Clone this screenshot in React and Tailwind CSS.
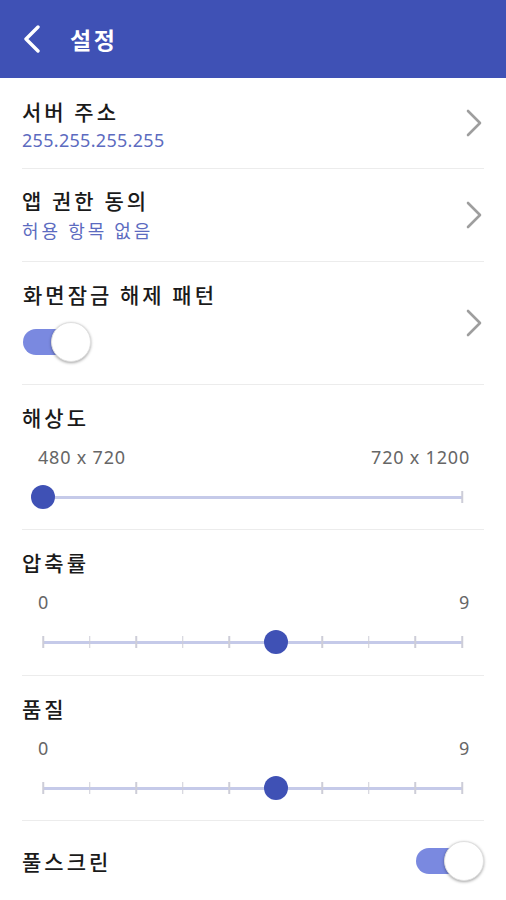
import React, { useState } from 'react';

const KR = { fontFamily: '"Noto Sans CJK KR", "Noto Sans", sans-serif' };
const NUM = { fontFamily: '"Noto Sans", "Noto Sans CJK KR", sans-serif' };

const Chevron = () => (
  <svg width="18" height="28" viewBox="0 0 18 28" className="mr-[1px]">
    <path d="M3 2 L15 14 L3 26" fill="none" stroke="#9e9e9e" strokeWidth="2.6" strokeLinecap="round" strokeLinejoin="round" />
  </svg>
);

const Toggle = ({ on, onClick }) => (
  <button onClick={onClick} className="relative w-[68px] h-[40px] shrink-0">
    <span className={`absolute left-0 top-[7px] w-[62px] h-[26px] rounded-full ${on ? 'bg-[#7a89e0]' : 'bg-[#bdbdbd]'}`} />
    <span
      className={`absolute top-0 w-[40px] h-[40px] rounded-full bg-white border border-[#e0e0e0] shadow-[0_1px_3px_rgba(0,0,0,0.35)] ${on ? 'right-0' : 'left-0'}`}
    />
  </button>
);

const Slider = ({ steps, value, ticks }) => {
  const pct = (value / steps) * 100;
  return (
    <div className="mt-[16px] ml-[21px] mr-[22px] relative h-[24px] flex items-center">
      <div className="w-full h-[3px] bg-[#c5cae9]" />
      {Array.from({ length: steps + 1 }).map((_, i) => (
        (ticks || i === steps) && (
          <span
            key={i}
            className="absolute top-[6px] w-[1.5px] h-[12px] bg-[#cdcdd8] -translate-x-1/2"
            style={{ left: `${(i / steps) * 100}%` }}
          />
        )
      ))}
      <span
        className="absolute top-0 w-[24px] h-[24px] rounded-full bg-[#3f51b5] -translate-x-1/2"
        style={{ left: `${pct}%` }}
      />
    </div>
  );
};

const Title = ({ children, className = '' }) => (
  <div className={`text-[21px] leading-[28px] font-medium tracking-[3px] text-[#1a1a1a] ${className}`}>{children}</div>
);

const SliderRow = ({ title, left, right, steps, value, ticks, h }) => (
  <div className={`mx-[22px] border-b border-[#ececec] ${h}`}>
    <Title className="pt-[18px]">{title}</Title>
    <div className="mt-[14px] pl-[16px] pr-[14px] flex justify-between text-[18px] leading-[24px] tracking-[0.8px] text-[#666666]" style={NUM}>
      <span>{left}</span>
      <span>{right}</span>
    </div>
    <Slider steps={steps} value={value} ticks={ticks} />
  </div>
);

export default function App() {
  const [pattern, setPattern] = useState(true);
  const [full, setFull] = useState(true);

  return (
    <div className="w-[506px] h-[900px] bg-white overflow-hidden" style={KR}>
      <header className="h-[78px] bg-[#3f51b5] flex items-center pl-[23px]">
        <svg width="18" height="28" viewBox="0 0 18 28">
          <path d="M15 2 L3 14 L15 26" fill="none" stroke="#ffffff" strokeWidth="3.4" strokeLinecap="round" strokeLinejoin="round" />
        </svg>
        <h1 className="ml-[29px] text-[23px] font-bold tracking-[2.5px] text-white leading-none">설정</h1>
      </header>

      <div className="mx-[22px] h-[91px] border-b border-[#ececec] flex justify-between items-center">
        <div className="self-start pt-[19px]">
          <Title>서버 주소</Title>
          <div className="mt-[3px] text-[18px] leading-[24px] tracking-[0.3px] text-[#5c6bc0]" style={NUM}>255.255.255.255</div>
        </div>
        <Chevron />
      </div>

      <div className="mx-[22px] h-[93px] border-b border-[#ececec] flex justify-between items-center">
        <div className="self-start pt-[17px]">
          <Title>앱 권한 동의</Title>
          <div className="mt-[4px] text-[18px] leading-[24px] tracking-[3px] text-[#5c6bc0]">허용 항목 없음</div>
        </div>
        <Chevron />
      </div>

      <div className="mx-[22px] h-[123px] border-b border-[#ececec] flex justify-between items-center">
        <div className="self-start pt-[18px] pl-[1px]">
          <Title>화면잠금 해제 패턴</Title>
          <div className="mt-[14px]">
            <Toggle on={pattern} onClick={() => setPattern(!pattern)} />
          </div>
        </div>
        <Chevron />
      </div>

      <SliderRow title="해상도" left="480 x 720" right="720 x 1200" steps={1} value={0} ticks={false} h="h-[145px]" />
      <SliderRow title="압축률" left="0" right="9" steps={9} value={5} ticks h="h-[146px]" />
      <SliderRow title="품질" left="0" right="9" steps={9} value={5} ticks h="h-[145px]" />

      <div className="mx-[22px] h-[79px] flex justify-between items-center">
        <Title>풀스크린</Title>
        <Toggle on={full} onClick={() => setFull(!full)} />
      </div>
    </div>
  );
}
